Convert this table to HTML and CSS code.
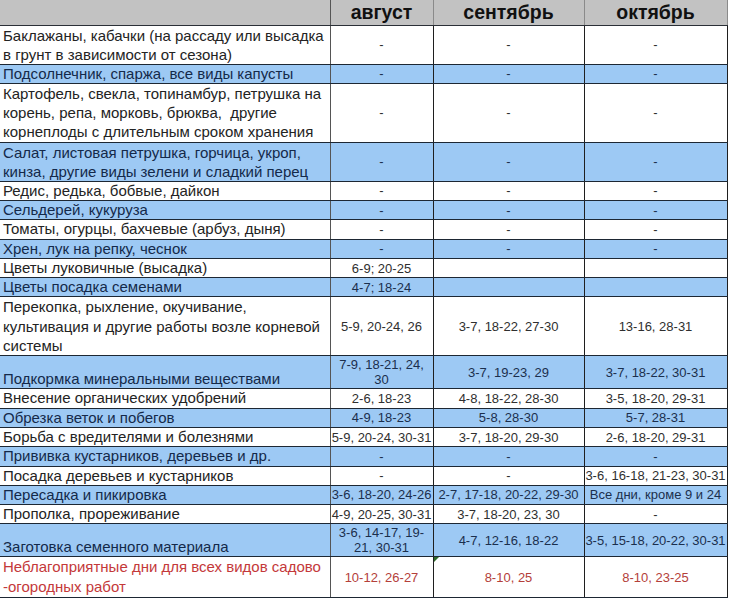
FILE: index.html
```html
<!DOCTYPE html>
<html lang="ru">
<head>
<meta charset="utf-8">
<title>Календарь работ</title>
<link rel="stylesheet" href="styles.css">
</head>
<body>
<table class="cal">
  <colgroup>
    <col class="c-name">
    <col class="c-aug">
    <col class="c-sep">
    <col class="c-oct">
  </colgroup>
  <thead>
    <tr class="head">
      <th class="name"></th>
      <th>август</th>
      <th>сентябрь</th>
      <th>октябрь</th>
    </tr>
  </thead>
  <tbody>
    <tr class="white h2">
      <td class="name">Баклажаны, кабачки (на рассаду или высадка<br>в грунт в зависимости от сезона)</td>
      <td>-</td><td>-</td><td>-</td>
    </tr>
    <tr class="blue h1">
      <td class="name">Подсолнечник, спаржа, все виды капусты</td>
      <td>-</td><td>-</td><td>-</td>
    </tr>
    <tr class="white h3">
      <td class="name">Картофель, свекла, топинамбур, петрушка на<br>корень, репа, морковь, брюква,&nbsp; другие<br>корнеплоды с длительным сроком хранения</td>
      <td>-</td><td>-</td><td>-</td>
    </tr>
    <tr class="blue h2">
      <td class="name">Салат, листовая петрушка, горчица, укроп,<br>кинза, другие виды зелени и сладкий перец</td>
      <td>-</td><td>-</td><td>-</td>
    </tr>
    <tr class="white h1">
      <td class="name">Редис, редька, бобвые, дайкон</td>
      <td>-</td><td>-</td><td>-</td>
    </tr>
    <tr class="blue h1">
      <td class="name">Сельдерей, кукуруза</td>
      <td>-</td><td>-</td><td>-</td>
    </tr>
    <tr class="white h1">
      <td class="name">Томаты, огурцы, бахчевые (арбуз, дыня)</td>
      <td>-</td><td>-</td><td>-</td>
    </tr>
    <tr class="blue h1">
      <td class="name">Хрен, лук на репку, чеснок</td>
      <td>-</td><td>-</td><td>-</td>
    </tr>
    <tr class="white h1">
      <td class="name">Цветы луковичные (высадка)</td>
      <td>6-9; 20-25</td><td></td><td></td>
    </tr>
    <tr class="blue h1">
      <td class="name">Цветы посадка семенами</td>
      <td>4-7; 18-24</td><td></td><td></td>
    </tr>
    <tr class="white h3">
      <td class="name">Перекопка, рыхление, окучивание,<br>культивация и другие работы возле корневой<br>системы</td>
      <td>5-9, 20-24, 26</td><td>3-7, 18-22, 27-30</td><td>13-16, 28-31</td>
    </tr>
    <tr class="blue hd">
      <td class="name bottom">Подкормка минеральными веществами</td>
      <td>7-9, 18-21, 24,<br>30</td><td>3-7, 19-23, 29</td><td>3-7, 18-22, 30-31</td>
    </tr>
    <tr class="white h1">
      <td class="name">Внесение органических удобрений</td>
      <td>2-6, 18-23</td><td>4-8, 18-22, 28-30</td><td>3-5, 18-20, 29-31</td>
    </tr>
    <tr class="blue h1">
      <td class="name">Обрезка веток и побегов</td>
      <td>4-9, 18-23</td><td>5-8, 28-30</td><td>5-7, 28-31</td>
    </tr>
    <tr class="white h1">
      <td class="name">Борьба с вредителями и болезнями</td>
      <td>5-9, 20-24, 30-31</td><td>3-7, 18-20, 29-30</td><td>2-6, 18-20, 29-31</td>
    </tr>
    <tr class="blue h1">
      <td class="name">Прививка кустарников, деревьев и др.</td>
      <td>-</td><td>-</td><td>-</td>
    </tr>
    <tr class="white h1">
      <td class="name">Посадка деревьев и кустарников</td>
      <td>-</td><td>-</td><td>3-6, 16-18, 21-23, 30-31</td>
    </tr>
    <tr class="blue h1">
      <td class="name">Пересадка и пикировка</td>
      <td>3-6, 18-20, 24-26</td><td>2-7, 17-18, 20-22, 29-30</td><td>Все дни, кроме 9 и 24</td>
    </tr>
    <tr class="white h1">
      <td class="name">Прополка, прореживание</td>
      <td>4-9, 20-25, 30-31</td><td>3-7, 18-20, 23, 30</td><td>-</td>
    </tr>
    <tr class="blue hd">
      <td class="name bottom">Заготовка семенного материала</td>
      <td>3-6, 14-17, 19-<br>21, 30-31</td><td>4-7, 12-16, 18-22</td><td>3-5, 15-18, 20-22, 30-31</td>
    </tr>
    <tr class="white h2 bad">
      <td class="name">Неблагоприятные дни для всех видов садово<br>-огородных работ</td>
      <td>10-12, 26-27</td><td class="note">8-10, 25</td><td>8-10, 23-25</td>
    </tr>
  </tbody>
</table>
</body>
</html>
```

FILE: styles.css
```css
html, body {
  margin: 0;
  padding: 0;
  background: #ffffff;
}

body {
  font-family: "Liberation Sans", Arial, sans-serif;
}

.cal {
  border-collapse: collapse;
  table-layout: fixed;
  width: 727px;
}

.c-name { width: 330px; }
.c-aug { width: 103px; }
.c-sep { width: 151px; }
.c-oct { width: 143px; }

.cal th,
.cal td {
  padding: 0;
  text-align: center;
  vertical-align: middle;
  border-top: 1px solid #1d2733;
  border-bottom: 1px solid #1d2733;
  border-left: 1px solid #1f1f1f;
  border-right: 1px solid #1f1f1f;
}

.cal .name {
  border-left: none;
  border-right: 1px solid #555;
  text-align: left;
  padding-left: 3px;
  font-size: 15px;
  line-height: 18.3px;
}

.cal td {
  font-size: 13px;
  line-height: 15px;
  color: #2f2f2f;
}

.cal td.name {
  color: #232323;
}

.cal .name.bottom {
  vertical-align: bottom;
  line-height: 18px;
}

.h2 .name { line-height: 19px; }
.h3 .name { line-height: 19.3px; }
.bad .name { line-height: 19.6px; }

.head {
  height: 25px;
  background: #c2c2c2;
}

.head th {
  border-top: none;
  border-left-color: #8a8a8a;
  border-right-color: #8a8a8a;
  border-bottom: 1px solid #2a2f36;
  font-size: 19.5px;
  font-weight: bold;
  color: #111;
  line-height: 22px;
}

.head th.name {
  border-right: 1px solid #555;
}

.white { background: #ffffff; }

.blue { background: #9dc9f4; }

.blue td {
  color: #1b2f4d;
}

.blue td.name {
  color: #14294a;
}

.bad td {
  color: #b4403a;
}

.bad td.name {
  color: #c4393a;
}

.note {
  position: relative;
}

.note::before {
  content: "";
  position: absolute;
  left: 0;
  top: 0;
  border-top: 5px solid #2d6a2a;
  border-right: 5px solid transparent;
}

.hd { height: 33px; }
```
